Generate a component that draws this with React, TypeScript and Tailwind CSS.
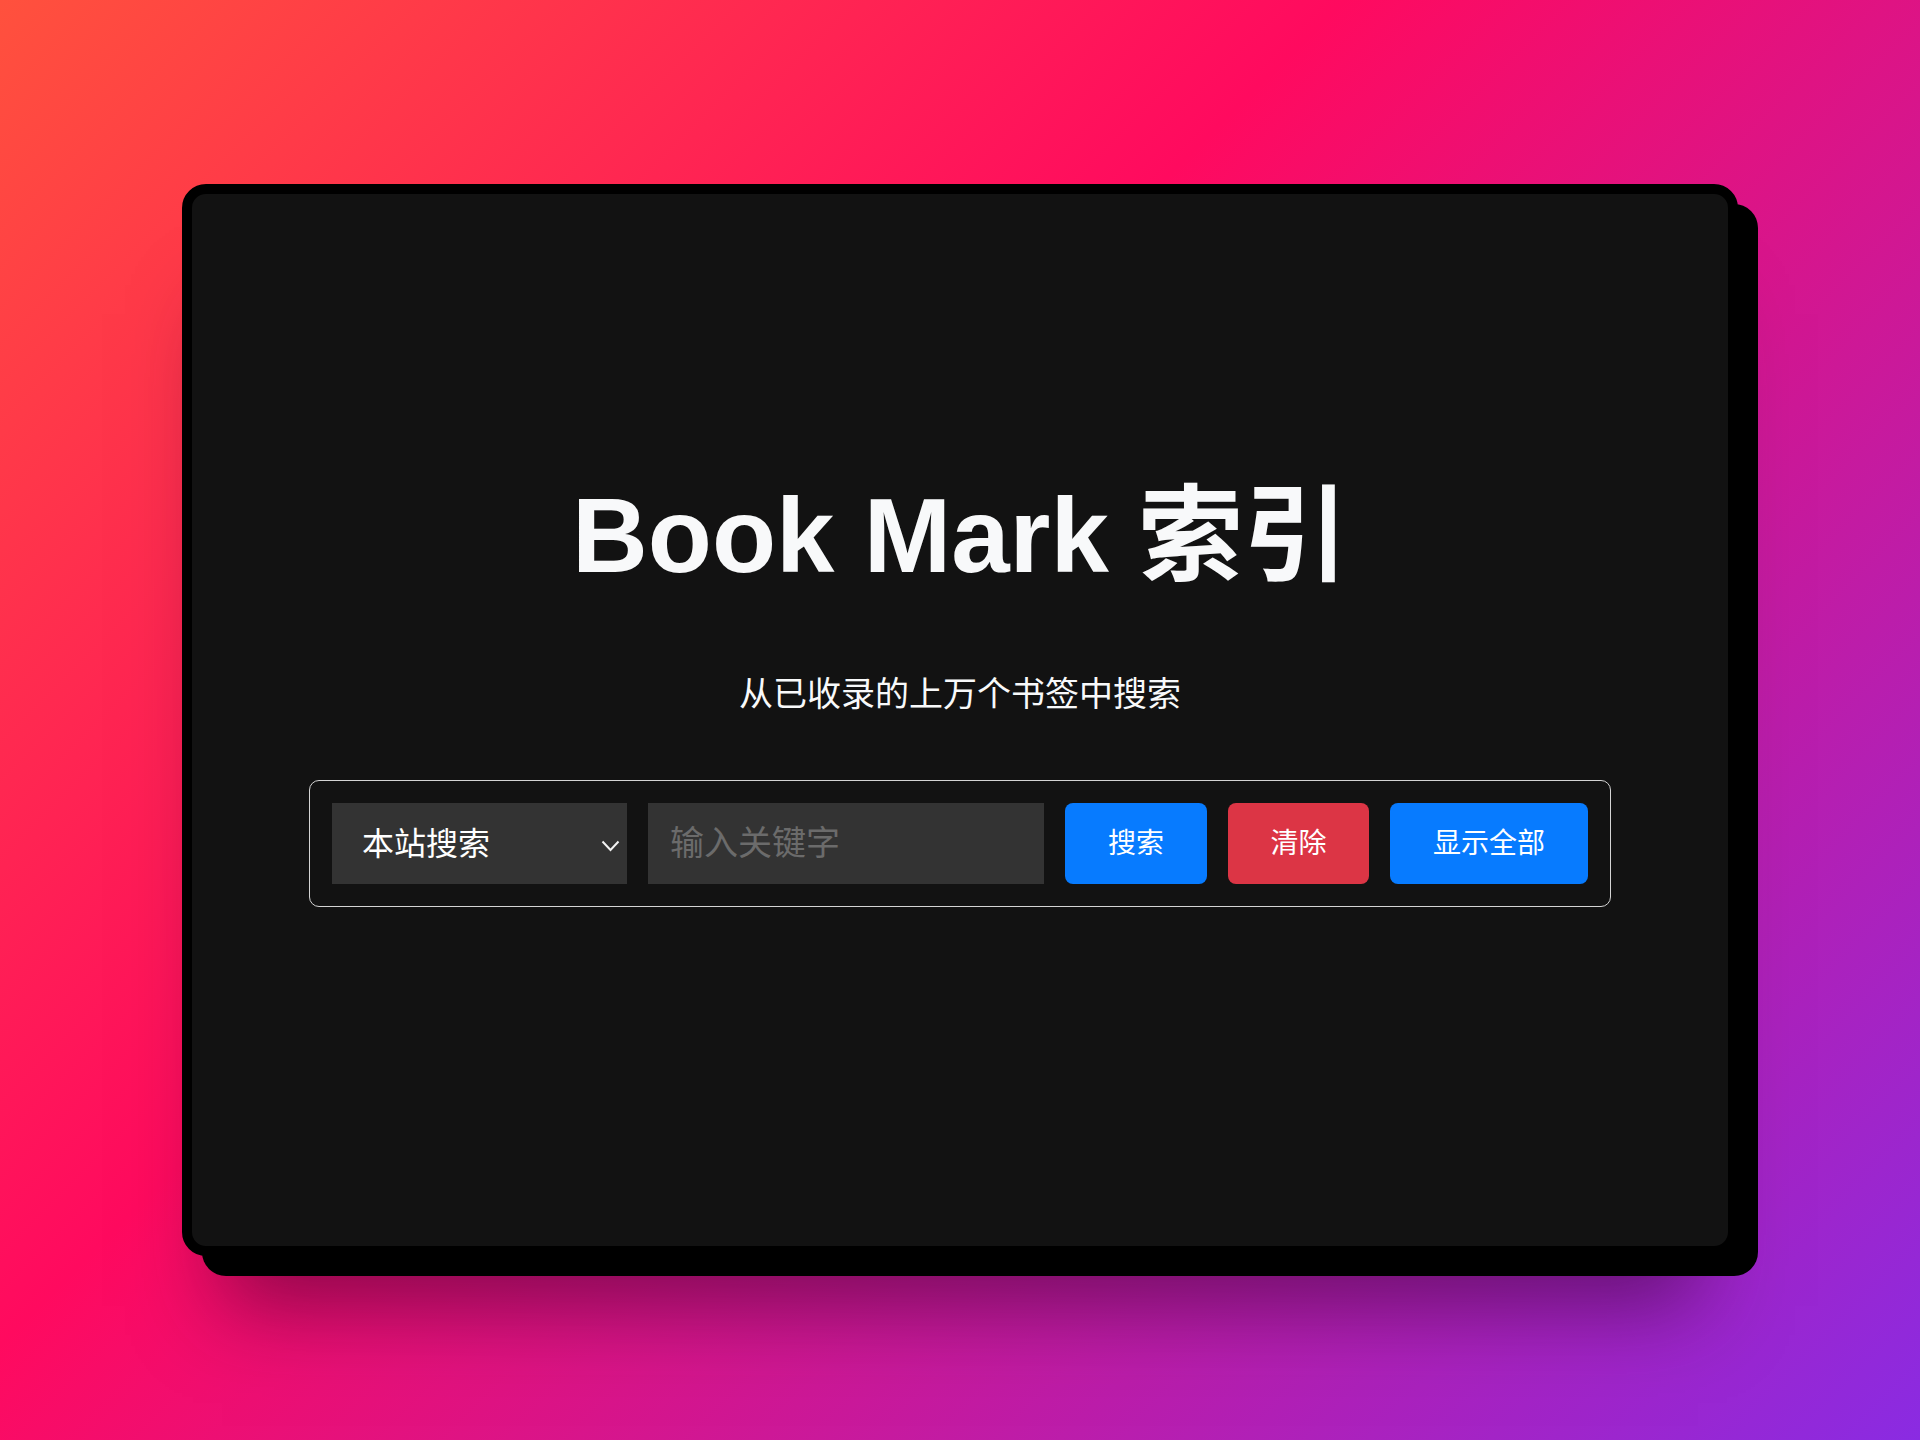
import React from 'react';

const font = 'font-["Liberation_Sans","Noto_Sans_CJK_SC",sans-serif]';

const SearchBar: React.FC = () => (
  <div className="mt-[69px] flex w-[1302px] gap-[21px] rounded-[10px] border border-[#d4d4d4] p-[22px]">
    <div className="relative h-[81px] w-[295px] shrink-0">
      <select
        defaultValue="site"
        className="h-full w-full appearance-none bg-[#333333] pl-[30px] text-[32px] text-white outline-none"
      >
        <option value="site">本站搜索</option>
      </select>
      {/* chevron sits over the select */}
      <svg
        className="pointer-events-none absolute right-[7px] top-[37px]"
        width="19"
        height="12"
        viewBox="0 0 19 12"
        fill="none"
      >
        <path d="M1.5 1.5 9.5 10l8-8.5" stroke="#f2f2f2" strokeWidth="2" />
      </svg>
    </div>
    <input
      placeholder="输入关键字"
      className="h-[81px] min-w-0 flex-1 bg-[#333333] pl-[22px] text-[34px] text-white outline-none placeholder:text-[#6b6b6b]"
    />
    <button className="h-[81px] w-[142px] shrink-0 rounded-[8px] bg-[#077bff] text-[28px] text-white">搜索</button>
    <button className="h-[81px] w-[141px] shrink-0 rounded-[8px] bg-[#dc3545] text-[28px] text-white">清除</button>
    <button className="h-[81px] w-[198px] shrink-0 rounded-[8px] bg-[#077bff] text-[28px] text-white">显示全部</button>
  </div>
);

const App: React.FC = () => {
  return (
    <div
      className={`flex h-[1440px] w-full items-center justify-center bg-[linear-gradient(135deg,#ff513d_0%,#ff0a5f_40%,#8a2be2_100%)] ${font}`}
    >
      <div className="h-[1072px] w-[1556px] rounded-[24px] border-[10px] border-black bg-[#121212] shadow-[20px_20px_0_#000,0_90px_80px_-40px_rgba(40,0,40,0.5)]">
        <div className="flex flex-col items-center pt-[289px]">
          <h1 className="text-[105px] font-bold leading-none text-[#f8f9fa]">Book Mark 索引</h1>
          <p className="mt-[89px] text-[34px] leading-none text-[#f8f9fa]">从已收录的上万个书签中搜索</p>
          <SearchBar />
        </div>
      </div>
    </div>
  );
};

export default App;
